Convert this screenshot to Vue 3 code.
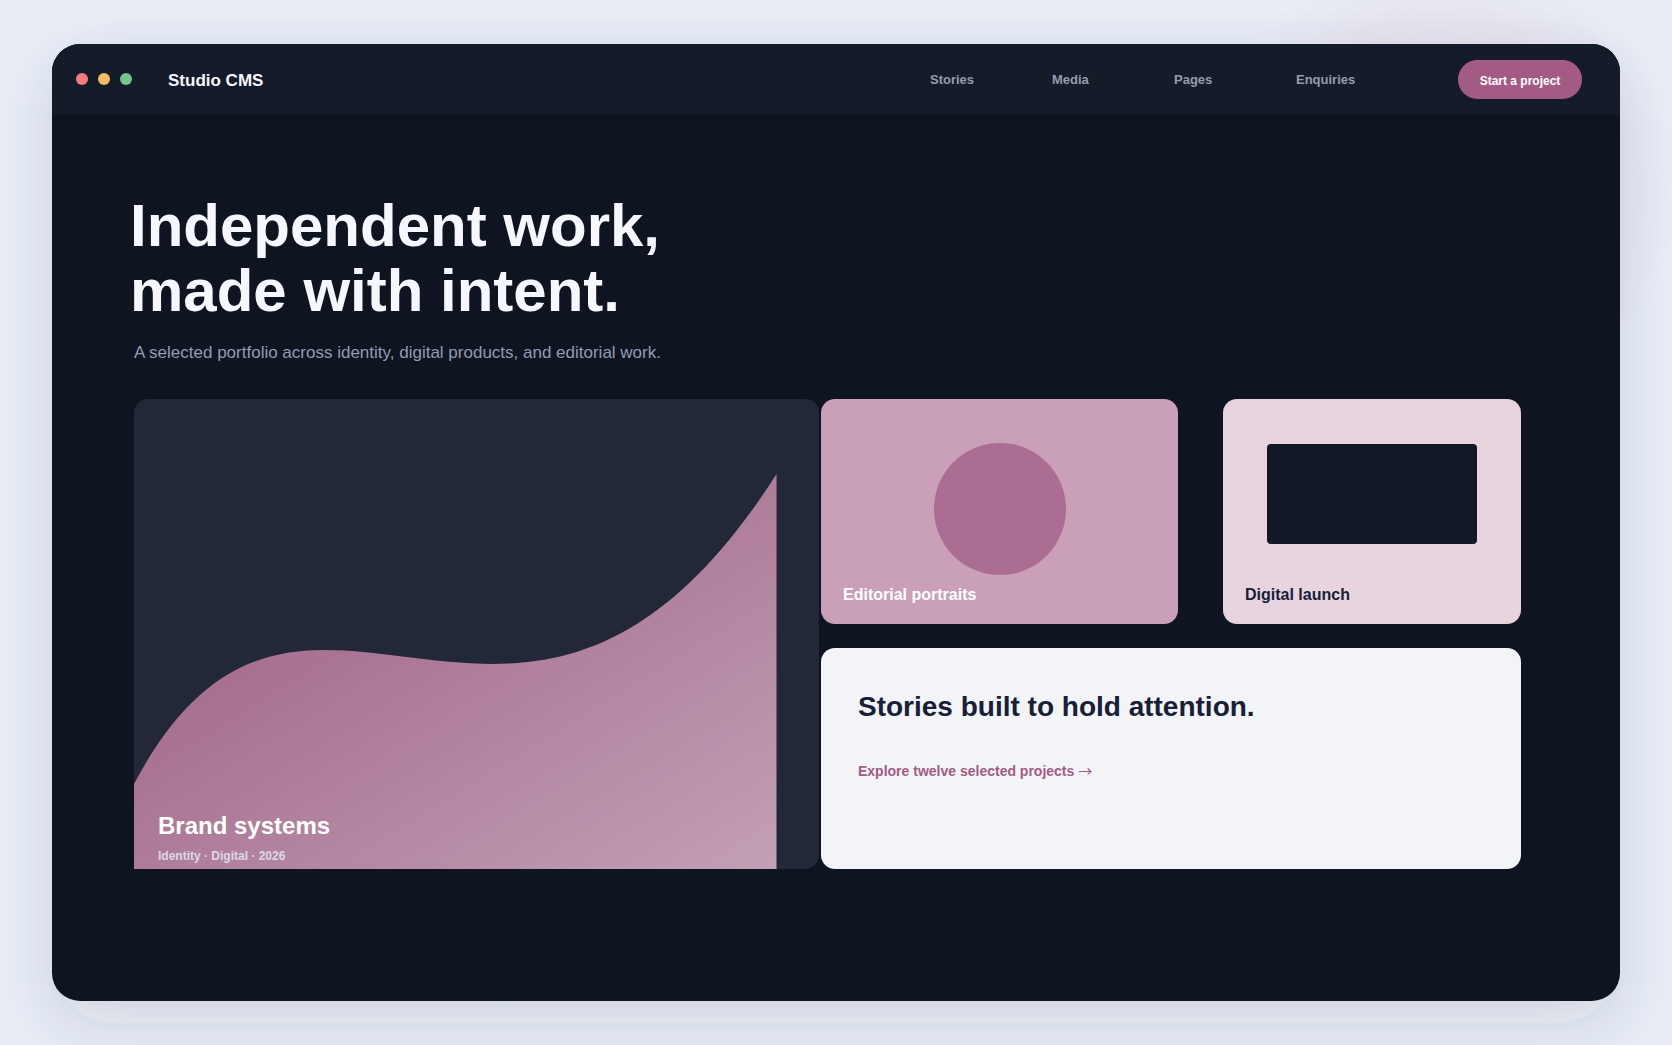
<script setup>
const links = ['Stories', 'Media', 'Pages', 'Enquiries']
</script>

<template>
  <div class="page">
    <div class="window">
      <header class="bar">
        <div class="dots" aria-hidden="true">
          <span class="dot red"></span>
          <span class="dot amber"></span>
          <span class="dot green"></span>
        </div>
        <strong class="brand">Studio CMS</strong>
        <nav class="nav" aria-label="Main">
          <a v-for="link in links" :key="link" href="#">{{ link }}</a>
        </nav>
        <button type="button" class="cta">Start a project</button>
      </header>

      <main class="content">
        <h1>Independent work,<br />made with intent.</h1>
        <p class="lead">A selected portfolio across identity, digital products, and editorial work.</p>

        <section class="work">
          <article class="card systems">
            <svg class="wave" viewBox="0 0 685 470" preserveAspectRatio="none" aria-hidden="true">
              <defs>
                <linearGradient id="wave-fill" x1="0" y1="0" x2="1" y2="1">
                  <stop offset="0" stop-color="#99597f" />
                  <stop offset="1" stop-color="#c3a0b5" />
                </linearGradient>
              </defs>
              <path d="M0 385C170 64 387 476 642.5 75V470H0Z" fill="url(#wave-fill)" />
            </svg>
            <div class="caption">
              <h2>Brand systems</h2>
              <p>Identity · Digital · 2026</p>
            </div>
          </article>

          <div class="side">
            <div class="pair">
              <article class="card portraits">
                <div class="disc"></div>
                <h3>Editorial portraits</h3>
              </article>
              <article class="card launch">
                <div class="screen"></div>
                <h3>Digital launch</h3>
              </article>
            </div>
            <article class="card stories">
              <h2>Stories built to hold attention.</h2>
              <a href="#">Explore twelve selected projects <span class="arrow">→</span></a>
            </article>
          </div>
        </section>
      </main>
    </div>
  </div>
</template>

<style>
body {
  margin: 0;
  background: #e8edf6;
}
</style>

<style scoped>
.page {
  position: relative;
  z-index: 0;
  box-sizing: border-box;
  min-height: 100vh;
  padding: 44px 52px;
  display: flex;
  overflow: hidden;
  font-family: "Liberation Sans", Arial, sans-serif;
  background: radial-gradient(circle at calc(100% - 232px) 190px, rgba(185, 90, 120, 0.12) 0, rgba(185, 90, 120, 0.09) 130px, rgba(185, 90, 120, 0) 240px), #e8edf6;
}

.window {
  position: relative;
  flex: 1;
  min-width: 0;
  display: flex;
  flex-direction: column;
  border-radius: 28px;
  background: #0e1521;
  box-shadow: 0 22px 60px rgba(30, 40, 80, 0.14);
}

/* soft plate that peeks out above and below the window */
.window::before {
  content: "";
  position: absolute;
  z-index: -1;
  inset: -22px 0;
  border-radius: 64px;
  background: linear-gradient(rgba(120, 125, 140, 0.01), rgba(255, 255, 255, 0.25));
}

.bar {
  box-sizing: border-box;
  height: 70px;
  padding: 0 38px 0 24px;
  display: flex;
  align-items: center;
  border-radius: 28px 28px 0 0;
  background: #151c29;
}

.dots {
  display: flex;
  gap: 10px;
}

.dot {
  width: 12px;
  height: 12px;
  border-radius: 50%;
}

.red { background: #f47c7a; }
.amber { background: #f1bd62; }
.green { background: #74c48b; }

.brand {
  margin-left: 36px;
  font-size: 17px;
  line-height: 20px;
  padding-top: 4px;
  color: #f5f7fc;
}

.nav {
  margin-left: auto;
  margin-right: 40px;
  padding-top: 2px;
  display: grid;
  grid-template-columns: repeat(4, 122px);
}

.nav a {
  font-size: 13px;
  line-height: 16px;
  font-weight: 700;
  color: #939cb0;
  text-decoration: none;
}

.cta {
  width: 124px;
  height: 39px;
  padding: 4px 0 0;
  border: 0;
  border-radius: 20px;
  background: #a35b84;
  color: #fff;
  font-family: inherit;
  font-size: 12px;
  line-height: 16px;
  font-weight: 700;
}

.content {
  padding: 79px 99px 80px 82px;
}

h1,
h2,
h3,
p {
  margin: 0;
}

h1 {
  margin-left: -4px;
  font-size: 60px;
  line-height: 65px;
  color: #f5f7fc;
}

.lead {
  margin-top: 17px;
  font-size: 17px;
  line-height: 26px;
  color: #939cb0;
}

.work {
  margin-top: 33px;
  display: grid;
  grid-template-columns: 685fr 700fr;
  gap: 2px;
}

.card {
  box-sizing: border-box;
  border-radius: 14px;
}

.systems {
  display: grid;
  height: 470px;
  background: #222837;
}

.wave,
.caption {
  grid-area: 1 / 1;
}

.wave {
  display: block;
  width: 100%;
  height: 470px;
}

.caption {
  position: relative;
  align-self: end;
  padding: 0 24px 5px;
}

.caption h2 {
  font-size: 24px;
  line-height: 28px;
  color: #fff;
}

.caption p {
  margin-top: 8px;
  font-size: 12px;
  line-height: 16px;
  font-weight: 700;
  color: #dcd9e4;
}

.side {
  display: grid;
  grid-template-rows: 225px 221px;
  gap: 24px;
}

.pair {
  display: grid;
  grid-template-columns: 357fr 298fr;
  gap: 45px;
}

.pair .card {
  display: flex;
  flex-direction: column;
  justify-content: space-between;
  padding: 44px 22px 20px;
}

.pair h3 {
  font-size: 16px;
  line-height: 18px;
}

.portraits {
  background: #c9a0b7;
  color: #fff;
}

.disc {
  align-self: center;
  width: 132px;
  height: 132px;
  border-radius: 50%;
  background: #ab6d92;
}

.launch {
  background: #e8d4df;
  color: #172036;
}

.screen {
  height: 100px;
  margin: 1px 22px 0;
  border-radius: 4px;
  background: #121827;
}

.stories {
  padding: 43px 37px;
  display: flex;
  flex-direction: column;
  align-items: flex-start;
  background: #f2f4f8;
}

.stories h2 {
  font-size: 28px;
  line-height: 32px;
  color: #172036;
}

.stories a {
  margin-top: 39px;
  font-size: 14px;
  line-height: 18px;
  font-weight: 700;
  color: #a35b84;
  text-decoration: none;
}

.arrow {
  font-family: "Noto Sans CJK SC", sans-serif;
  font-weight: 400;
  line-height: 14px;
}
</style>
